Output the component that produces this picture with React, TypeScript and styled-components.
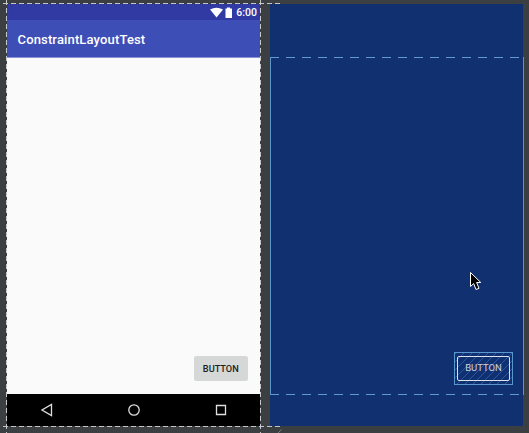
import React from 'react';
import styled, { createGlobalStyle } from 'styled-components';

const GlobalStyle = createGlobalStyle`
  html, body { margin: 0; padding: 0; overflow: hidden; }
  * { box-sizing: border-box; }
`;

const Editor = styled.main`
  position: relative;
  display: grid;
  grid-template-columns: 253px 253px;
  grid-template-rows: 422px;
  column-gap: 10px;
  width: 529px;
  height: 433px;
  padding: 4px 0 0 7px;
  overflow: hidden;
  background: #3c3f41;
  font-family: Roboto, sans-serif;
`;

const Phone = styled.section`
  display: flex;
  flex-direction: column;
`;

const StatusBar = styled.header`
  height: 16px;
  display: flex;
  align-items: center;
  justify-content: flex-end;
  padding: 2px 3px 0 0;
  background: #303aa2;
  color: #fff;
  font-size: 10.5px;
  font-weight: 500;
  line-height: 14px;
`;

const StatusIcons = styled.svg`
  width: 23px;
  height: 12px;
  margin-right: 3px;
`;

const AppBar = styled.div`
  height: 38px;
  display: flex;
  align-items: center;
  padding: 2px 0 0 10.5px;
  border-bottom: 1px solid #8c93d6;
  background: #3e4eb7;
  color: #fff;
  font-size: 13px;
  font-weight: 500;
  letter-spacing: 0.15px;
`;

const Content = styled.div`
  flex: 1;
  display: flex;
  align-items: flex-end;
  justify-content: flex-end;
  padding: 0 12.5px 13px 0;
  background: #fafafa;
`;

const RaisedButton = styled.button`
  width: 53.5px;
  height: 25px;
  padding: 0;
  border: 0;
  border-radius: 2px;
  background: #d6d7d7;
  color: #202020;
  font: 500 9.2px/24px Roboto, sans-serif;
`;

const NavBar = styled.nav`
  height: 32px;
  display: flex;
  align-items: center;
  justify-content: space-between;
  padding: 0 32.5px;
  background: #000;
`;

const NavIcon = styled.svg`
  width: 14px;
  height: 14px;
  fill: none;
  stroke: #dedede;
  stroke-width: 1.3;
`;

const Blueprint = styled.section`
  display: flex;
  flex-direction: column;
  padding-top: 53px;
  background: #11306f;
`;

const dash = 'repeating-linear-gradient(90deg, #6199d2 0 9px, transparent 9px 16px)';

const Constraints = styled.div`
  width: 254px;
  height: 338px;
  display: flex;
  align-items: flex-end;
  justify-content: flex-end;
  padding: 0 10px 9px 0;
  border: solid #5c94cc;
  border-width: 0 1px;
  background: ${dash} -1px 0 / 100% 1px no-repeat, ${dash} -1px 100% / 100% 1px no-repeat;
`;

const Widget = styled.div`
  width: 59px;
  height: 33px;
  margin-bottom: 1px;
  display: grid;
  place-items: center;
  border: 1px solid #5997d1;
  background: repeating-linear-gradient(135deg, #2857b0 0 1.2px, transparent 1.2px 5.66px);
`;

const WidgetOutline = styled.div`
  width: 53px;
  height: 25px;
  border: 1px solid #dce2ec;
  border-radius: 2px;
  color: #d0d3d8;
  font-size: 9.5px;
  line-height: 22px;
  text-align: center;
`;

const Guides = styled.svg`
  position: absolute;
  inset: 0;
  width: 529px;
  height: 433px;
  pointer-events: none;
  fill: none;
  stroke: #c5c6c7;
  stroke-dasharray: 5 3;
`;

const ResizeGrip = styled.svg`
  position: absolute;
  left: 277px;
  top: 429px;
  width: 5px;
  height: 5px;
  stroke: #777a7b;
`;

const Cursor = styled.svg`
  position: absolute;
  left: 470px;
  top: 272px;
  width: 13px;
  height: 20px;
`;

export default function App() {
  return (
    <>
      <GlobalStyle />
      <Editor>
        <Phone>
          <StatusBar>
            <StatusIcons viewBox="0 0 23 12" fill="#fff">
              <path d="M0 2.5Q6.5-1 13 2.5L6.5 10.5Z" />
              <path d="M15.5 1.5H17V0.5H20V1.5H22V11H15.5Z" />
            </StatusIcons>
            6:00
          </StatusBar>
          <AppBar>ConstraintLayoutTest</AppBar>
          <Content>
            <RaisedButton>BUTTON</RaisedButton>
          </Content>
          <NavBar>
            <NavIcon viewBox="0 0 14 14"><path d="M11.5 1.5V12.5L2 7Z" /></NavIcon>
            <NavIcon viewBox="0 0 14 14"><circle cx="7" cy="7" r="5.2" /></NavIcon>
            <NavIcon viewBox="0 0 14 14"><path d="M2.5 2.5H11.5V11.5H2.5Z" /></NavIcon>
          </NavBar>
        </Phone>
        <Blueprint>
          <Constraints>
            <Widget>
              <WidgetOutline>BUTTON</WidgetOutline>
            </Widget>
          </Constraints>
        </Blueprint>
        <Guides>
          <path d="M3 3.5H280M3 426.5H280M6.5 0V433M260.5 0V433" />
        </Guides>
        <ResizeGrip viewBox="0 0 5 5">
          <path d="M0.5 4.5L4.5 0.5" />
        </ResizeGrip>
        <Cursor viewBox="0 0 13 20">
          <path d="M0.5 0.5V14.5L3.7 11.6L6 17.5L9 16.3L6.6 10.5H10.8Z" fill="#000" stroke="#fff" />
        </Cursor>
      </Editor>
    </>
  );
}
